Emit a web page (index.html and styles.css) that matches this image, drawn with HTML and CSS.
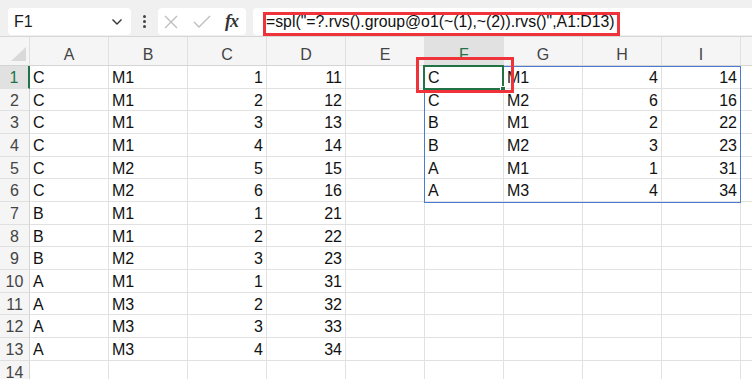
FILE: index.html
```html
<!DOCTYPE html>
<html lang="en">
<head>
  <meta charset="UTF-8">
  <title>Sheet</title>
  <link rel="stylesheet" href="styles.css">
</head>
<body>
  <div class="app">
    <div class="toolbar">
      <div class="namebox">
        <span>F1</span>
        <svg class="chev" width="12" height="8" viewBox="0 0 12 8"><path d="M1.5 1.5 L6 6 L10.5 1.5" fill="none" stroke="#333" stroke-width="1.4"/></svg>
      </div>
      <div class="dots"><i></i><i></i><i></i></div>
      <div class="fnbox">
        <svg width="16" height="16" viewBox="0 0 16 16"><path d="M2 2 L14 14 M14 2 L2 14" stroke="#bdbdbd" stroke-width="1.3"/></svg>
        <svg width="20" height="16" viewBox="0 0 20 16"><path d="M2 8 L7 13 L18 2" fill="none" stroke="#bdbdbd" stroke-width="1.3"/></svg>
        <span class="fx">fx</span>
      </div>
      <div class="formula">=spl("=?.rvs().group@o1(~(1),~(2)).rvs()",A1:D13)</div>
    </div>

    <div class="sheet">
      <div class="corner"><svg width="20" height="16" viewBox="0 0 20 16"><path d="M19 1 L19 15 L4 15 Z" fill="#d9d9d9"/></svg></div>
      <div class="col">A</div><div class="col">B</div><div class="col">C</div><div class="col">D</div><div class="col">E</div>
      <div class="col active">F</div><div class="col">G</div><div class="col">H</div><div class="col">I</div><div class="col"></div>

      <div class="rh active">1</div><div class="c">C</div><div class="c">M1</div><div class="c n">1</div><div class="c n">11</div><div class="c"></div><div class="c">C</div><div class="c">M1</div><div class="c n">4</div><div class="c n">14</div><div class="c"></div>
      <div class="rh">2</div><div class="c">C</div><div class="c">M1</div><div class="c n">2</div><div class="c n">12</div><div class="c"></div><div class="c">C</div><div class="c">M2</div><div class="c n">6</div><div class="c n">16</div><div class="c"></div>
      <div class="rh">3</div><div class="c">C</div><div class="c">M1</div><div class="c n">3</div><div class="c n">13</div><div class="c"></div><div class="c">B</div><div class="c">M1</div><div class="c n">2</div><div class="c n">22</div><div class="c"></div>
      <div class="rh">4</div><div class="c">C</div><div class="c">M1</div><div class="c n">4</div><div class="c n">14</div><div class="c"></div><div class="c">B</div><div class="c">M2</div><div class="c n">3</div><div class="c n">23</div><div class="c"></div>
      <div class="rh">5</div><div class="c">C</div><div class="c">M2</div><div class="c n">5</div><div class="c n">15</div><div class="c"></div><div class="c">A</div><div class="c">M1</div><div class="c n">1</div><div class="c n">31</div><div class="c"></div>
      <div class="rh">6</div><div class="c">C</div><div class="c">M2</div><div class="c n">6</div><div class="c n">16</div><div class="c"></div><div class="c">A</div><div class="c">M3</div><div class="c n">4</div><div class="c n">34</div><div class="c"></div>
      <div class="rh">7</div><div class="c">B</div><div class="c">M1</div><div class="c n">1</div><div class="c n">21</div><div class="c"></div><div class="c"></div><div class="c"></div><div class="c"></div><div class="c"></div><div class="c"></div>
      <div class="rh">8</div><div class="c">B</div><div class="c">M1</div><div class="c n">2</div><div class="c n">22</div><div class="c"></div><div class="c"></div><div class="c"></div><div class="c"></div><div class="c"></div><div class="c"></div>
      <div class="rh">9</div><div class="c">B</div><div class="c">M2</div><div class="c n">3</div><div class="c n">23</div><div class="c"></div><div class="c"></div><div class="c"></div><div class="c"></div><div class="c"></div><div class="c"></div>
      <div class="rh">10</div><div class="c">A</div><div class="c">M1</div><div class="c n">1</div><div class="c n">31</div><div class="c"></div><div class="c"></div><div class="c"></div><div class="c"></div><div class="c"></div><div class="c"></div>
      <div class="rh">11</div><div class="c">A</div><div class="c">M3</div><div class="c n">2</div><div class="c n">32</div><div class="c"></div><div class="c"></div><div class="c"></div><div class="c"></div><div class="c"></div><div class="c"></div>
      <div class="rh">12</div><div class="c">A</div><div class="c">M3</div><div class="c n">3</div><div class="c n">33</div><div class="c"></div><div class="c"></div><div class="c"></div><div class="c"></div><div class="c"></div><div class="c"></div>
      <div class="rh">13</div><div class="c">A</div><div class="c">M3</div><div class="c n">4</div><div class="c n">34</div><div class="c"></div><div class="c"></div><div class="c"></div><div class="c"></div><div class="c"></div><div class="c"></div>
      <div class="rh">14</div><div class="c"></div><div class="c"></div><div class="c"></div><div class="c"></div><div class="c"></div><div class="c"></div><div class="c"></div><div class="c"></div><div class="c"></div><div class="c"></div>

      <!-- selection overlays -->
      <div class="range"></div>
      <div class="cursor"><span class="handle"></span></div>
    </div>

    <!-- red annotation boxes -->
    <div class="mark mark-formula"></div>
    <div class="mark mark-cell"></div>
  </div>
</body>
</html>
```

FILE: styles.css
```css
* {
  box-sizing: border-box;
}

body {
  margin: 0;
  background: #fff;
  font-family: "Liberation Sans", Arial, sans-serif;
  color: #1a1a1a;
}

.app {
  position: relative;
  width: 752px;
  height: 379px;
  overflow: hidden;
}

/* Toolbar */
.toolbar {
  height: 37px;
  background: #f0f0f0;
  border-bottom: 1px solid #d6d6d6;
  display: flex;
  align-items: flex-start;
  padding-top: 8px;
  padding-left: 8px;
}

.namebox {
  width: 123px;
  height: 27px;
  background: #fff;
  border-radius: 4px;
  display: flex;
  align-items: center;
  justify-content: space-between;
  padding: 0 8px 0 6px;
  font-size: 16px;
}

.dots {
  width: 27px;
  height: 27px;
  display: flex;
  flex-direction: column;
  align-items: center;
  justify-content: center;
  gap: 2px;
}

.dots i {
  width: 3px;
  height: 3px;
  background: #444;
  border-radius: 50%;
}

.fnbox {
  width: 88px;
  height: 27px;
  background: #fff;
  border-radius: 4px;
  display: flex;
  align-items: center;
  justify-content: space-between;
  padding: 0 8px 0 5px;
}

.fx {
  font-family: "Liberation Serif", serif;
  font-style: italic;
  font-weight: bold;
  font-size: 18px;
  color: #333;
  letter-spacing: -1px;
}

.formula {
  flex: 1;
  margin-left: 7px;
  height: 27px;
  background: #fff;
  border-radius: 4px 0 0 4px;
  font-size: 15.8px;
  line-height: 27px;
  padding-left: 13px;
  color: #111;
  white-space: nowrap;
}

/* Grid */
.sheet {
  position: relative;
  display: grid;
  grid-template-columns: 30px repeat(9, 79px) 35px;
  grid-template-rows: 29px repeat(14, 22.67px);
  font-size: 16px;
}

.corner,
.col {
  background: #f5f5f5;
  border-right: 1px solid #e0e0e0;
  border-bottom: 1px solid #d4d4d4;
}

.corner {
  display: flex;
  align-items: flex-end;
  justify-content: flex-end;
  padding: 0 2px 3px 0;
}

.col {
  text-align: center;
  color: #444;
  padding-top: 8px;
  line-height: 20px;
}

.col.active {
  background: #e1e1e1;
  color: #217346;
  border-bottom-color: #217346;
}

.rh {
  background: #f5f5f5;
  border-right: 1px solid #d4d4d4;
  border-bottom: 1px solid #e0e0e0;
  text-align: center;
  color: #444;
  line-height: 23px;
}

.rh.active {
  background: #e1e1e1;
  color: #217346;
  border-right: 2px solid #217346;
}

.c {
  border-right: 1px solid #e1e1e1;
  border-bottom: 1px solid #e1e1e1;
  padding: 0 3px;
  line-height: 23px;
  white-space: nowrap;
  color: #111;
}

.c.n {
  text-align: right;
}

/* Selection */
.range {
  position: absolute;
  left: 424px;
  top: 29px;
  width: 317px;
  height: 137px;
  border: 1px solid #4a7bd0;
}

.cursor {
  position: absolute;
  left: 423px;
  top: 28px;
  width: 81px;
  height: 25px;
  border: 2px solid #217346;
}

.handle {
  position: absolute;
  right: -4px;
  bottom: -4px;
  width: 6px;
  height: 6px;
  background: #217346;
  border: 1px solid #fff;
}

/* Annotations */
.mark {
  position: absolute;
  border: 3px solid #f0333b;
}

.mark-formula {
  left: 263px;
  top: 12px;
  width: 357px;
  height: 24px;
}

.mark-cell {
  left: 416px;
  top: 57px;
  width: 98px;
  height: 36px;
}
```
